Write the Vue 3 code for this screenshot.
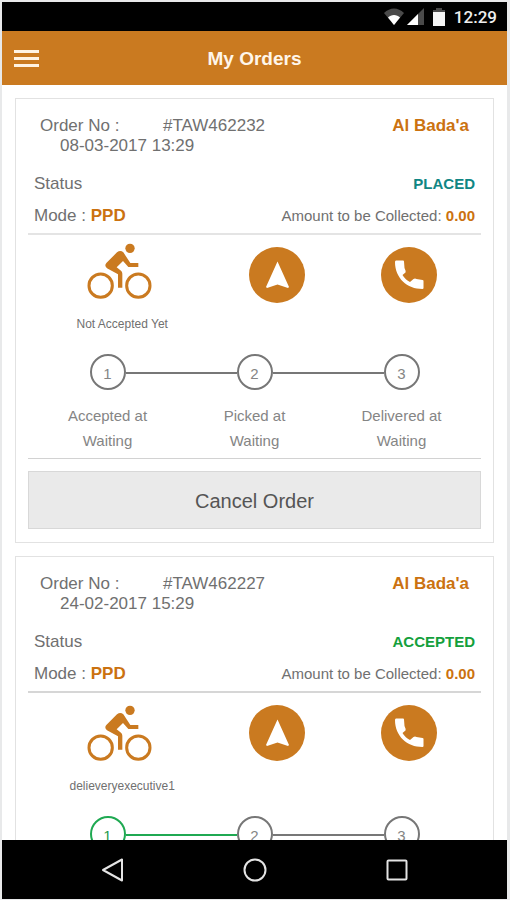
<script setup>
const steps = ['Accepted at', 'Picked at', 'Delivered at']

const orders = [
  {
    number: '#TAW462232',
    date: '08-03-2017 13:29',
    area: "Al Bada'a",
    status: 'PLACED',
    state: 'placed',
    mode: 'PPD',
    amount: '0.00',
    rider: 'Not Accepted Yet',
    done: 0,
  },
  {
    number: '#TAW462227',
    date: '24-02-2017 15:29',
    area: "Al Bada'a",
    status: 'ACCEPTED',
    state: 'accepted',
    mode: 'PPD',
    amount: '0.00',
    rider: 'delieveryexecutive1',
    done: 1,
  },
]
</script>

<template>
  <div class="phone">
    <div class="statusbar">
      <svg class="wifi" viewBox="0 0 20 17" aria-hidden="true">
        <path d="M0 5C6-1 14-1 20 5L10 17Z" fill="#4a4a4a" />
        <path d="M4 9.500C7 6 13 6 16 9.500L10 17Z" fill="#fff" />
      </svg>
      <svg class="signal" viewBox="0 0 17 17" aria-hidden="true">
        <path d="M17 0V17H0Z" fill="#4a4a4a" />
        <path d="M11 6V17H0Z" fill="#fff" />
      </svg>
      <svg class="battery" viewBox="0 0 12 18" aria-hidden="true">
        <path d="M3 0H9V2H12V5H0V2H3Z" fill="#4a4a4a" />
        <path d="M0 4H12V18H0Z" fill="#f4f4f4" />
      </svg>
      <span class="clock">12:29</span>
    </div>

    <header class="appbar">
      <button class="menu" type="button" aria-label="Menu">
        <span></span><span></span><span></span>
      </button>
      <h1>My Orders</h1>
    </header>

    <main class="orders">
      <article v-for="order in orders" :key="order.number" class="card" :class="order.state">
        <div class="head">
          <div class="ident">
            <span>Order No :</span>
            <span>{{ order.number }}</span>
          </div>
          <strong class="area">{{ order.area }}</strong>
        </div>
        <div class="date">{{ order.date }}</div>

        <div class="rows">
          <div class="row">
            <span>Status</span>
            <strong class="status">{{ order.status }}</strong>
          </div>
          <div class="row">
            <span>Mode : <strong>{{ order.mode }}</strong></span>
            <span class="amount">Amount to be Collected: <strong>{{ order.amount }}</strong></span>
          </div>
        </div>

        <div class="actions">
          <div class="rider">
            <svg class="bike" viewBox="0 0 210 171" aria-hidden="true">
              <g fill="none" stroke="currentColor" stroke-width="9">
                <circle cx="41" cy="128" r="35" />
                <circle cx="154" cy="128" r="35" />
              </g>
              <g fill="currentColor" transform="translate(-7 -3)">
                <circle cx="136" cy="19" r="14" />
                <path d="M65 63 97 31Q107 23 116 31L137 63H161V75H131L115 57 96 76 109 86Q113 89 113 95V137H100V97L67 79Q58 71 65 63Z" />
              </g>
            </svg>
            <span class="name">{{ order.rider }}</span>
          </div>
          <button class="round" type="button" aria-label="Navigate">
            <svg viewBox="0 0 56 56" aria-hidden="true">
              <path d="M28.500 14.500 40 40 39 41 28.500 37.500 18 41 17 40Z" fill="#fff" />
            </svg>
          </button>
          <button class="round" type="button" aria-label="Call">
            <svg viewBox="0 0 56 56" aria-hidden="true">
              <path
                d="M15 13.500H22Q23 13.500 23 14.500L23.500 21Q25 24 24.500 25.500L21.500 28Q24.500 33 29 35L32.500 32Q34 31 35.500 32L41.500 33Q42.500 33 42.500 34V41Q42.500 42 41.500 42C26 42 14 31 14 15Q14 13.500 15 13.500Z"
                fill="#fff"
              />
            </svg>
          </button>
        </div>

        <ol class="steps">
          <li v-for="(step, i) in steps" :key="step" :class="{ done: i < order.done }">
            <span class="dot">{{ i + 1 }}</span>
            <span>{{ step }}</span>
            <span>Waiting</span>
          </li>
        </ol>

        <button class="cancel" type="button">Cancel Order</button>
      </article>
    </main>

    <nav class="navbar">
      <button type="button" aria-label="Back">
        <svg viewBox="0 0 24 24"><path d="M21 1.500V22.500L2 12Z" /></svg>
      </button>
      <button type="button" aria-label="Home">
        <svg viewBox="0 0 24 24"><circle cx="12" cy="12" r="10.500" /></svg>
      </button>
      <button type="button" aria-label="Recent apps">
        <svg viewBox="0 0 24 24"><rect x="2.500" y="2.500" width="19" height="19" rx="1" /></svg>
      </button>
    </nav>
  </div>
</template>

<style>
body {
  background: #fff;
}
</style>

<style scoped>
.phone {
  --brand: #ca7a20;
  --brand-text: #cb7210;
  box-sizing: border-box;
  display: flex;
  flex-direction: column;
  height: 100vh;
  border: 2px solid #e8e9ea;
  border-right-width: 3px;
  border-bottom-width: 1px;
  background: #fff;
  color: #707070;
  font-family: "Liberation Sans", Arial, sans-serif;
  font-size: 17px;
}

button {
  padding: 0;
  border: 0;
  background: none;
  font-family: inherit;
  cursor: pointer;
}

svg {
  display: block;
}

.statusbar {
  flex: none;
  display: flex;
  align-items: center;
  justify-content: flex-end;
  height: 29px;
  padding-right: 10px;
  background: #000;
  color: #eee;
}

.wifi {
  width: 20px;
  height: 17px;
}

.signal {
  width: 17px;
  height: 17px;
  margin-left: 3px;
}

.battery {
  width: 12px;
  height: 18px;
  margin-left: 9px;
}

.clock {
  margin-left: 9px;
  font-family: Roboto, sans-serif;
  font-size: 17px;
  font-weight: 500;
}

.appbar {
  flex: none;
  display: grid;
  grid-template-columns: 1fr auto 1fr;
  align-items: center;
  height: 54px;
  padding: 0 12px;
  background: var(--brand);
  color: #fff6ea;
}

.appbar h1 {
  margin: 0;
  padding-top: 2px;
  font-size: 19px;
  font-weight: 700;
}

.menu {
  display: grid;
  gap: 4px;
  width: 25px;
}

.menu span {
  height: 3px;
  background: #fff3e2;
}

.orders {
  flex: 1;
  min-height: 0;
  overflow-y: auto;
  scrollbar-width: none;
  display: flex;
  flex-direction: column;
  gap: 13px;
  padding: 13px;
}

.card {
  flex: none;
  padding: 16px 12px 13px;
  border: 1px solid #e2e2e2;
}

strong {
  color: var(--brand-text);
}

.head {
  display: flex;
  justify-content: space-between;
  padding: 0 12px;
  line-height: 21px;
}

.ident {
  display: grid;
  grid-template-columns: 123px auto;
}

.area {
  font-size: 17px;
}

.date {
  padding-left: 32px;
  line-height: 20px;
}

.rows {
  padding: 12px 6px 1px;
  border-bottom: 2px solid #e4e4e4;
}

.accepted .rows {
  border-bottom-color: #d6d6d6;
}

.row {
  display: flex;
  align-items: center;
  justify-content: space-between;
  line-height: 32px;
}

.status {
  font-size: 15px;
}

.placed .status {
  color: #108684;
}

.accepted .status {
  color: #14a03c;
}

.amount {
  font-size: 15px;
}

.actions {
  display: grid;
  grid-template-columns: 4fr 3fr 3fr;
  justify-items: center;
  align-items: start;
  padding: 12px 6px 0;
}

.placed .actions {
  padding-top: 8px;
}

.placed .round {
  margin-top: 4px;
}

.rider {
  display: flex;
  flex-direction: column;
  align-items: center;
  gap: 17px;
  line-height: 14px;
  font-size: 12px;
}

.bike {
  width: 70px;
  height: 57px;
  color: var(--brand);
}

.round {
  width: 56px;
  height: 56px;
  border-radius: 50%;
  background: var(--brand);
}

.steps {
  display: grid;
  grid-template-columns: repeat(3, 1fr);
  margin: 0;
  padding: 23px 6px 5px;
  border-bottom: 1px solid #d2d2d2;
  list-style: none;
  font-size: 15px;
  line-height: 25px;
}

.steps li {
  position: relative;
  display: flex;
  flex-direction: column;
  align-items: center;
  color: #858585;
}

.steps li:not(:last-child)::after {
  content: "";
  position: absolute;
  top: 18px;
  left: calc(50% + 18px);
  width: calc(100% - 36px);
  height: 2px;
  background: #777;
}

.dot {
  box-sizing: border-box;
  width: 36px;
  height: 36px;
  margin-bottom: 13px;
  padding-top: 2px;
  border: 2px solid #777;
  border-radius: 50%;
  line-height: 32px;
  text-align: center;
}

.steps .done .dot {
  border-color: #1fa952;
  color: #1f9a4c;
}

.steps li.done::after {
  background: #1fa952;
}

.cancel {
  display: block;
  width: 100%;
  height: 58px;
  margin-top: 12px;
  padding-top: 2px;
  border: 1px solid #d8d8d8;
  background: #eaeaea;
  color: #555;
  font-size: 20px;
}

.navbar {
  flex: none;
  display: flex;
  justify-content: center;
  gap: 118px;
  height: 59px;
  background: #000;
}

.navbar svg {
  width: 24px;
  height: 24px;
  fill: none;
  stroke: #e4e4e4;
  stroke-width: 2;
  stroke-linejoin: round;
}
</style>
